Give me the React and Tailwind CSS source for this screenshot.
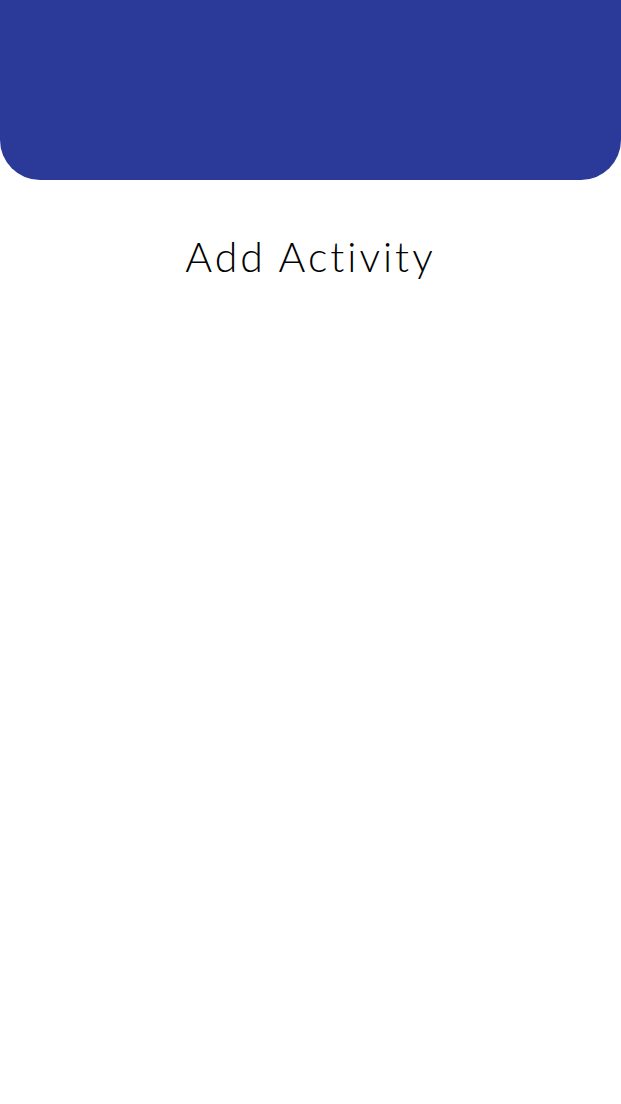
export default function App() {
    return (
        <div className="min-h-screen bg-white">
            <header className="h-[180px] rounded-b-[40px] bg-[#2b3a98]" />
            <h1 className="mt-[53px] text-center font-['Lato',sans-serif] text-[41px] leading-[48px] font-light tracking-[3px] text-black">
                Add Activity
            </h1>
        </div>
    );
}
